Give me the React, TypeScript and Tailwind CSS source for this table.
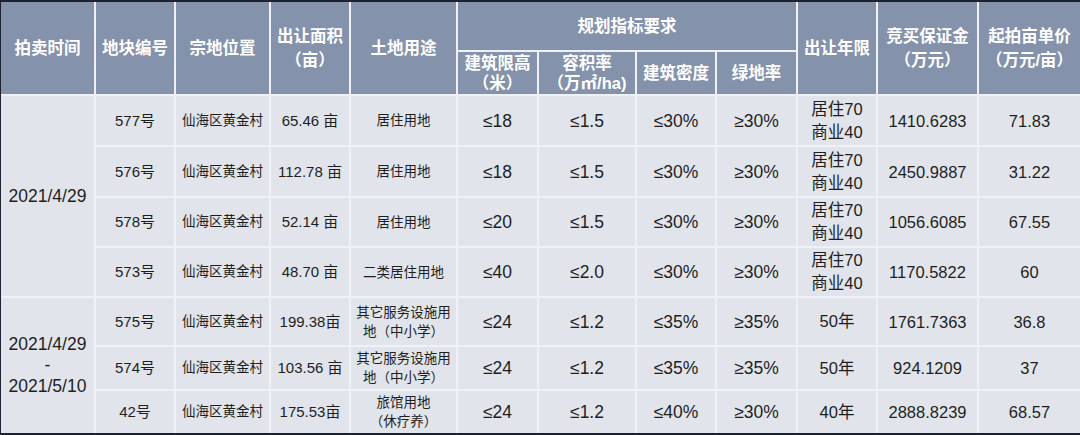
import React from "react";

const cjk = { fontFamily: '"Liberation Sans", "Noto Sans CJK SC", sans-serif' };

type Row = {
  no: string;
  area: string;
  use: string[];
  height: string;
  far: string;
  density: string;
  green: string;
  years: string[];
  deposit: string;
  price: string;
  h: string;
};

const rows: Row[] = [
  { no: "577号", area: "65.46 亩", use: ["居住用地"], height: "≤18", far: "≤1.5", density: "≤30%", green: "≥30%", years: ["居住70", "商业40"], deposit: "1410.6283", price: "71.83", h: "h-[51px]" },
  { no: "576号", area: "112.78 亩", use: ["居住用地"], height: "≤18", far: "≤1.5", density: "≤30%", green: "≥30%", years: ["居住70", "商业40"], deposit: "2450.9887", price: "31.22", h: "h-[51px]" },
  { no: "578号", area: "52.14 亩", use: ["居住用地"], height: "≤20", far: "≤1.5", density: "≤30%", green: "≥30%", years: ["居住70", "商业40"], deposit: "1056.6085", price: "67.55", h: "h-[50px]" },
  { no: "573号", area: "48.70 亩", use: ["二类居住用地"], height: "≤40", far: "≤2.0", density: "≤30%", green: "≥30%", years: ["居住70", "商业40"], deposit: "1170.5822", price: "60", h: "h-[50px]" },
  { no: "575号", area: "199.38亩", use: ["其它服务设施用", "地（中小学）"], height: "≤24", far: "≤1.2", density: "≤35%", green: "≥35%", years: ["50年"], deposit: "1761.7363", price: "36.8", h: "h-[49px]" },
  { no: "574号", area: "103.56 亩", use: ["其它服务设施用", "地（中小学）"], height: "≤24", far: "≤1.2", density: "≤35%", green: "≥35%", years: ["50年"], deposit: "924.1209", price: "37", h: "h-[44px]" },
  { no: "42号", area: "175.53亩", use: ["旅馆用地", "（休疗养）"], height: "≤24", far: "≤1.2", density: "≤40%", green: "≥30%", years: ["40年"], deposit: "2888.8239", price: "68.57", h: "h-[44px]" },
];

const th = "border-2 border-[#eef1f5] bg-[#8592ab] text-white font-bold text-[16.5px] text-center align-middle p-0";
const td = "border-2 border-[#eef1f5] bg-[#e1e5eb] text-[#1e1e1e] text-center align-middle p-0";

// each line is a fixed-height block so the row keeps its height
const L = ({ children, cls = "h-[20px] leading-[20px]" }: { children: React.ReactNode; cls?: string }) => (
  <div className={`${cls} whitespace-nowrap`}>{children}</div>
);

export default function App() {
  return (
    <div className="w-[1080px] h-[435px] overflow-hidden bg-[#e1e5eb] border-t-2 border-b-2 border-l border-[#1c2232]" style={cjk}>
      <table className="w-[1079px] table-fixed border-collapse -mt-[2px]">
        <colgroup>
          <col className="w-[94px]" />
          <col className="w-[80px]" />
          <col className="w-[95px]" />
          <col className="w-[80px]" />
          <col className="w-[107px]" />
          <col className="w-[81px]" />
          <col className="w-[98px]" />
          <col className="w-[80px]" />
          <col className="w-[81px]" />
          <col className="w-[80px]" />
          <col className="w-[101px]" />
          <col className="w-[102px]" />
        </colgroup>
        <thead>
          <tr className="h-[50px]">
            <th rowSpan={2} className={`${th} border-l-0`}><L>拍卖时间</L></th>
            <th rowSpan={2} className={th}><L>地块编号</L></th>
            <th rowSpan={2} className={th}><L>宗地位置</L></th>
            <th rowSpan={2} className={th}><L cls="h-[24px] leading-[24px]">出让面积</L><L cls="h-[24px] leading-[24px]">（亩）</L></th>
            <th rowSpan={2} className={th}><L>土地用途</L></th>
            <th colSpan={4} className={th}><L>规划指标要求</L></th>
            <th rowSpan={2} className={th}><L>出让年限</L></th>
            <th rowSpan={2} className={th}><L cls="h-[24px] leading-[24px]">竞买保证金</L><L cls="h-[24px] leading-[24px]">（万元）</L></th>
            <th rowSpan={2} className={`${th} border-r-0`}><L cls="h-[24px] leading-[24px]">起拍亩单价</L><L cls="h-[24px] leading-[24px]">（万元/亩）</L></th>
          </tr>
          <tr className="h-[44px]">
            <th className={th}><L>建筑限高</L><L>（米）</L></th>
            <th className={th}><L>容积率</L><L>（万㎡/ha)</L></th>
            <th className={th}><L>建筑密度</L></th>
            <th className={th}><L>绿地率</L></th>
          </tr>
        </thead>
        <tbody>
          {rows.map((r, i) => (
            <tr key={r.no} className={r.h}>
              {i === 0 && (
                <td rowSpan={4} className={`${td} border-l-0 text-[17.5px]`}><L>2021/4/29</L></td>
              )}
              {i === 4 && (
                <td rowSpan={3} className={`${td} border-l-0 text-[17.5px]`}>
                  <L cls="h-[21px] leading-[21px]">2021/4/29</L>
                  <L cls="h-[21px] leading-[21px]">-</L>
                  <L cls="h-[21px] leading-[21px]">2021/5/10</L>
                </td>
              )}
              <td className={`${td} text-[15px]`}><L>{r.no}</L></td>
              <td className={`${td} text-[13.5px]`}><L>仙海区黄金村</L></td>
              <td className={`${td} text-[15px]`}><L>{r.area}</L></td>
              <td className={`${td} text-[13.5px]`}>
                {r.use.map((u) => (
                  <L key={u} cls="h-[19px] leading-[19px]">{u}</L>
                ))}
              </td>
              <td className={`${td} text-[17.5px]`}><L>{r.height}</L></td>
              <td className={`${td} text-[17.5px]`}><L>{r.far}</L></td>
              <td className={`${td} text-[17.5px]`}><L>{r.density}</L></td>
              <td className={`${td} text-[17.5px]`}><L>{r.green}</L></td>
              <td className={`${td} text-[16.5px]`}>
                {r.years.map((y) => (
                  <L key={y} cls="h-[23px] leading-[23px]">{y}</L>
                ))}
              </td>
              <td className={`${td} text-[16.5px]`}><L>{r.deposit}</L></td>
              <td className={`${td} border-r-0 text-[16.5px]`}><L>{r.price}</L></td>
            </tr>
          ))}
        </tbody>
      </table>
    </div>
  );
}
